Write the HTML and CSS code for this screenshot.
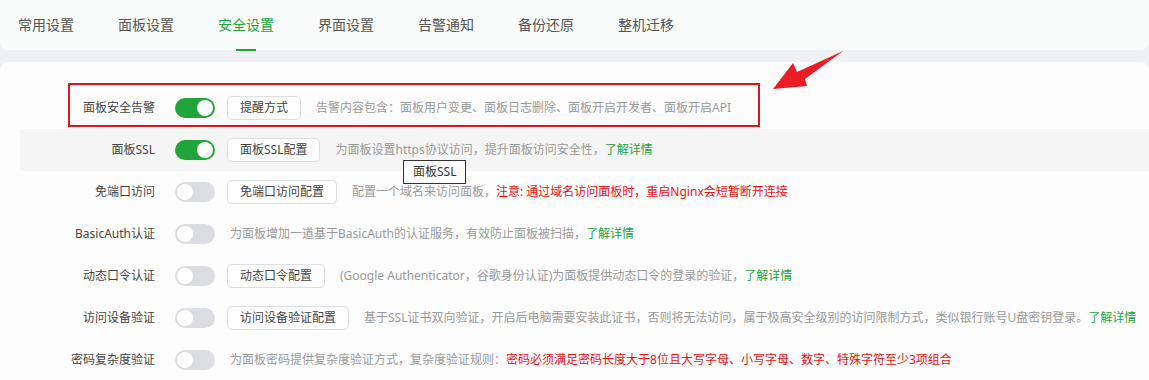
FILE: index.html
```html
<!DOCTYPE html>
<html lang="zh-CN">
<head>
<meta charset="utf-8">
<title>安全设置</title>
<link rel="stylesheet" href="styles.css">
</head>
<body>
<div class="page">
  <nav class="tabs">
    <span class="tab">常用设置</span>
    <span class="tab">面板设置</span>
    <span class="tab active">安全设置</span>
    <span class="tab">界面设置</span>
    <span class="tab">告警通知</span>
    <span class="tab">备份还原</span>
    <span class="tab">整机迁移</span>
  </nav>
  <section class="card">
    <div class="row">
      <div class="label">面板安全告警</div>
      <span class="switch on"></span>
      <button class="btn">提醒方式</button>
      <div class="desc">告警内容包含：面板用户变更、面板日志删除、面板开启开发者、面板开启API</div>
    </div>
    <div class="row hover">
      <div class="label">面板SSL</div>
      <span class="switch on"></span>
      <button class="btn">面板SSL配置</button>
      <div class="desc">为面板设置https协议访问，提升面板访问安全性，<a class="link">了解详情</a></div>
    </div>
    <div class="row">
      <div class="label">免端口访问</div>
      <span class="switch"></span>
      <button class="btn">免端口访问配置</button>
      <div class="desc">配置一个域名来访问面板，<span class="warn">注意: 通过域名访问面板时，重启Nginx会短暂断开连接</span></div>
    </div>
    <div class="row">
      <div class="label">BasicAuth认证</div>
      <span class="switch"></span>
      <div class="desc">为面板增加一道基于BasicAuth的认证服务，有效防止面板被扫描，<a class="link">了解详情</a></div>
    </div>
    <div class="row">
      <div class="label">动态口令认证</div>
      <span class="switch"></span>
      <button class="btn">动态口令配置</button>
      <div class="desc">(Google Authenticator，谷歌身份认证)为面板提供动态口令的登录的验证，<a class="link">了解详情</a></div>
    </div>
    <div class="row">
      <div class="label">访问设备验证</div>
      <span class="switch"></span>
      <button class="btn">访问设备验证配置</button>
      <div class="desc">基于SSL证书双向验证，开启后电脑需要安装此证书，否则将无法访问，属于极高安全级别的访问限制方式，类似银行账号U盘密钥登录。<a class="link">了解详情</a></div>
    </div>
    <div class="row">
      <div class="label">密码复杂度验证</div>
      <span class="switch"></span>
      <div class="desc">为面板密码提供复杂度验证方式，复杂度验证规则：<span class="warn">密码必须满足密码长度大于8位且大写字母、小写字母、数字、特殊字符至少3项组合</span></div>
    </div>
  </section>

  <div class="highlight-box"></div>
  <svg class="arrow" width="1149" height="120" viewBox="0 0 1149 120">
    <polygon points="773,89 793,63 797,72 843,51 805,79 807,86" fill="#ec1c24"/>
  </svg>
  <div class="tooltip">面板SSL</div>
</div>
</body>
</html>
```

FILE: styles.css
```css
* { box-sizing: border-box; }

html, body {
  margin: 0;
  padding: 0;
  background: #f0f1f2;
}

body {
  font-family: "Noto Sans", "Noto Sans CJK SC", sans-serif;
  font-size: 12px;
  color: #444;
}

.page {
  position: relative;
  width: 1149px;
  height: 380px;
  overflow: hidden;
}

.tabs {
  display: flex;
  height: 50px;
  align-items: center;
  padding-left: 18px;
  background: #fafbfb;
  border-radius: 0 0 8px 8px;
}

.tab {
  position: relative;
  width: 100px;
  font-size: 14px;
  line-height: 20px;
  color: #555;
  white-space: nowrap;
}

.tab.active {
  color: #20a53a;
}

.tab.active::after {
  content: "";
  position: absolute;
  left: 18px;
  top: 34px;
  width: 20px;
  height: 2px;
  background: #20a53a;
}

.card {
  margin-top: 12px;
  background: #fdfdfd;
  border-radius: 8px 8px 0 0;
  padding-top: 25px;
  height: 318px;
}

.row {
  display: flex;
  align-items: center;
  height: 42px;
  margin-left: 20px;
  white-space: nowrap;
}

.row.hover {
  background: #f5f5f5;
}

.label {
  width: 135px;
  text-align: right;
  color: #444;
  line-height: 18px;
}

.switch {
  position: relative;
  width: 40px;
  height: 20px;
  margin-left: 20px;
  border-radius: 10px;
  background: #dcdde3;
  flex: none;
}

.switch::after {
  content: "";
  position: absolute;
  left: 2px;
  top: 2px;
  width: 16px;
  height: 16px;
  border-radius: 50%;
  background: #fff;
}

.switch.on {
  background: #20a53a;
}

.switch.on::after {
  left: 22px;
}

.btn {
  margin-left: 12px;
  height: 24px;
  padding: 0 12px;
  border: 1px solid #dcdfe6;
  border-radius: 5px;
  background: #fff;
  font-family: inherit;
  font-size: 12px;
  color: #444;
  line-height: 22px;
  flex: none;
}

.desc {
  margin-left: 15px;
  color: #999;
  line-height: 18px;
}

.link {
  color: #20a53a;
}

.warn {
  color: #f01010;
}

.highlight-box {
  position: absolute;
  left: 68px;
  top: 83px;
  width: 692px;
  height: 44px;
  border: 2px solid #e0141e;
}

.arrow {
  position: absolute;
  left: 0;
  top: 0;
}

.tooltip {
  position: absolute;
  left: 403px;
  top: 160px;
  height: 24px;
  padding: 0 9px;
  border: 1px solid #333;
  background: #fff;
  color: #333;
  line-height: 22px;
  font-size: 12px;
}
```
